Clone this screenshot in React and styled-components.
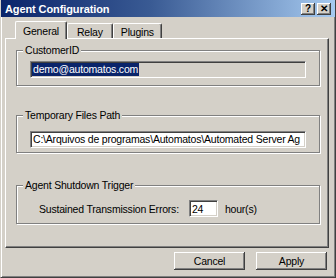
import React from "react";
import styled, { createGlobalStyle } from "styled-components";

const Global = createGlobalStyle`
  html, body {
    margin: 0;
    padding: 0;
    background: #d4d0c8;
  }
  body {
    font-family: "Liberation Sans", Arial, sans-serif;
    font-size: 10.5px;
    letter-spacing: -0.2px;
    color: #000;
  }
`;

const Window = styled.div`
  width: 336px;
  height: 278px;
  box-sizing: border-box;
  background: #d4d0c8;
  border-left: 1px solid #d4d0c8;
  border-right: 1px solid #404040;
  border-bottom: 1px solid #404040;
  box-shadow: inset 1px 0 0 #fff, inset -1px -1px 0 #808080;
  padding: 0 2px 2px 2px;
  display: flex;
  flex-direction: column;
`;

const TitleBar = styled.div`
  height: 17px;
  margin: 0 -2px 0 -2px;
  background: linear-gradient(90deg, #0a246a 0%, #3a5b94 45%, #a6caf0 100%);
  display: flex;
  align-items: center;
  padding: 0 4px 0 4px;
`;

const Title = styled.div`
  flex: 1;
  color: #fff;
  font-weight: bold;
  font-size: 11px;
  letter-spacing: -0.1px;
`;

const CaptionButton = styled.div`
  width: 14px;
  height: 12px;
  margin-left: 2px;
  background: #d4d0c8;
  box-shadow: inset -1px -1px 0 #404040, inset 1px 1px 0 #fff,
    inset -2px -2px 0 #808080;
  display: flex;
  align-items: center;
  justify-content: center;
  font-weight: bold;
  font-size: 10px;
  line-height: 1;
`;

const Body = styled.div`
  flex: 1;
  display: flex;
  flex-direction: column;
  padding: 4px 4px 0 2px;
`;

const TabRow = styled.div`
  display: flex;
  align-items: flex-end;
  height: 17px;
  padding-left: 10px;
`;

const Tab = styled.div`
  position: relative;
  z-index: ${(p) => (p.$active ? 2 : 1)};
  height: ${(p) => (p.$active ? 18 : 15)}px;
  margin-bottom: ${(p) => (p.$active ? -1 : 0)}px;
  padding: 0 ${(p) => p.$px}px;
  box-sizing: border-box;
  background: #d4d0c8;
  border-top: 1px solid #fff;
  border-left: 1px solid #fff;
  border-right: 1px solid #404040;
  border-radius: 2px 2px 0 0;
  box-shadow: inset -1px 0 0 #808080;
  display: flex;
  align-items: center;
  padding-top: ${(p) => (p.$active ? 1 : 2)}px;
`;

const Panel = styled.div`
  height: 210px;
  box-sizing: border-box;
  border-top: 1px solid #fff;
  border-left: 1px solid #fff;
  border-right: 1px solid #404040;
  border-bottom: 1px solid #404040;
  box-shadow: inset -1px -1px 0 #808080;
  padding: 5px 8px 0 10px;
  display: flex;
  flex-direction: column;
`;

const Group = styled.fieldset`
  margin: ${(p) => p.$mt}px 0 0;
  padding: 0;
  min-width: 0;
  border: 1px solid #808080;
  box-shadow: inset 1px 1px 0 #fff, 1px 1px 0 #fff;
`;

const Legend = styled.legend`
  margin-left: 6px;
  padding: 0 2px;
  line-height: 13px;
  background: #d4d0c8;
`;

const GroupBody = styled.div`
  padding: ${(p) => p.$pt}px 11px ${(p) => p.$pb}px ${(p) => p.$pl}px;
  display: flex;
  align-items: center;
`;

const Field = styled.div`
  width: ${(p) => p.$w}px;
  height: 17px;
  box-sizing: border-box;
  background: ${(p) => (p.$disabled ? "#d4d0c8" : "#fff")};
  border-top: 1px solid #808080;
  border-left: 1px solid #808080;
  border-right: 1px solid #fff;
  border-bottom: 1px solid #fff;
  box-shadow: inset 1px 1px 0 #404040, inset -1px -1px 0 #d4d0c8;
  padding: ${(p) => (p.$top ? "2px 2px 0" : "0 2px")};
  display: flex;
  align-items: ${(p) => (p.$top ? "flex-start" : "center")};
  white-space: nowrap;
  overflow: hidden;
  line-height: 13px;
`;

const Selected = styled.span`
  background: #0a246a;
  color: #fff;
  margin-left: -1px;
  padding: 0 1px;
`;

const Label = styled.span`
  margin-right: 10px;
`;

const Unit = styled.span`
  margin-left: 7px;
`;

const ButtonRow = styled.div`
  display: flex;
  justify-content: flex-end;
  gap: 11px;
  padding: 4px 2px 0 0;
`;

const Button = styled.div`
  width: 71px;
  height: 18px;
  box-sizing: border-box;
  background: #d4d0c8;
  box-shadow: inset -1px -1px 0 #404040, inset 1px 1px 0 #fff,
    inset -2px -2px 0 #808080;
  display: flex;
  align-items: center;
  justify-content: center;
`;

export default function App() {
  return (
    <>
      <Global />
      <Window>
        <TitleBar>
          <Title>Agent Configuration</Title>
          <CaptionButton>?</CaptionButton>
          <CaptionButton>✕</CaptionButton>
        </TitleBar>
        <Body>
          <TabRow>
            <Tab $active $px={7}>General</Tab>
            <Tab $px={9}>Relay</Tab>
            <Tab $px={7}>Plugins</Tab>
          </TabRow>
          <Panel>
            <Group $mt={0}>
              <Legend>CustomerID</Legend>
              <GroupBody $pt={4} $pb={7} $pl={13}>
                <Field $w={276} $disabled>
                  <Selected>demo@automatos.com</Selected>
                </Field>
              </GroupBody>
            </Group>
            <Group $mt={23}>
              <Legend>Temporary Files Path</Legend>
              <GroupBody $pt={9} $pb={4} $pl={13}>
                <Field $w={276}>
                  C:\Arquivos de programas\Automatos\Automated Server Ag
                </Field>
              </GroupBody>
            </Group>
            <Group $mt={26}>
              <Legend>Agent Shutdown Trigger</Legend>
              <GroupBody $pt={8} $pb={6} $pl={22}>
                <Label>Sustained Transmission Errors:</Label>
                <Field $w={29} $top>24</Field>
                <Unit>hour(s)</Unit>
              </GroupBody>
            </Group>
          </Panel>
          <ButtonRow>
            <Button>Cancel</Button>
            <Button>Apply</Button>
          </ButtonRow>
        </Body>
      </Window>
    </>
  );
}
